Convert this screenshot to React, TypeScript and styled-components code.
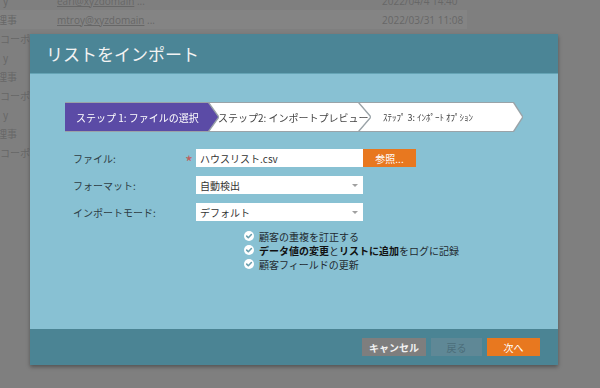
import React from "react";
import styled, { createGlobalStyle } from "styled-components";

const Global = createGlobalStyle`
  html, body { margin: 0; padding: 0; }
  body {
    width: 600px; height: 388px; overflow: hidden;
    background: #7f7f7f;
    font-family: "Noto Sans CJK JP", "Open Sans", sans-serif;
  }
`;

const Page = styled.div`
  position: relative;
  width: 600px;
  height: 388px;
  overflow: hidden;
  background: #7f7f7f;
`;

const List = styled.div`
  display: flex;
  flex-direction: column;
  margin-top: -9px;
`;

const Row = styled.div<{ $hl?: boolean }>`
  display: grid;
  grid-template-columns: 57px 325px 1fr;
  align-items: center;
  width: 467px;
  height: 19px;
  background: ${(p) => (p.$hl ? "#848484" : "transparent")};
  font-family: "Open Sans", "Noto Sans CJK JP", sans-serif;
  font-size: 10px;
  color: #676767;
`;

const LabelCell = styled.div<{ $indent: number }>`
  overflow: hidden;
  white-space: nowrap;
  text-indent: ${(p) => p.$indent}px;
  font-family: "Noto Sans CJK JP", sans-serif;
`;

const EmailCell = styled.div`
  white-space: nowrap;
  & span { text-decoration: underline; }
`;

const DateCell = styled.div`
  white-space: nowrap;
`;

const Dialog = styled.div`
  position: absolute;
  left: 30px;
  top: 34px;
  width: 528px;
  display: flex;
  flex-direction: column;
  box-shadow: 0 2px 4px rgba(0, 0, 0, 0.35);
`;

const Header = styled.div`
  height: 39px;
  background: #4b8596;
  border-bottom: 1px solid #65a4b5;
  display: flex;
  align-items: center;
  padding-left: 16px;
  color: #f3f3f3;
  font-size: 17px;
`;

const Body = styled.div`
  height: 255px;
  box-sizing: border-box;
  background: #88c1d3;
  padding: 29px 35px 0 35px;
  display: flex;
  flex-direction: column;
`;

const StepBar = styled.div`
  display: flex;
  height: 28px;
`;

const StepWrap = styled.div<{ $z: number; $overlap: number; $w: number }>`
  position: relative;
  z-index: ${(p) => p.$z};
  margin-left: ${(p) => -p.$overlap}px;
  width: ${(p) => p.$w}px;
  flex: none;
  filter: drop-shadow(0 1px 0 #9aa3a8) drop-shadow(0 -1px 0 #9aa3a8)
    drop-shadow(1px 0 0 #9aa3a8);
`;

const StepShape = styled.div<{ $active?: boolean; $tip: number; $small?: boolean; $pad: number }>`
  height: 28px;
  box-sizing: border-box;
  display: flex;
  align-items: center;
  padding-left: ${(p) => p.$pad}px;
  white-space: nowrap;
  overflow: hidden;
  background: ${(p) => (p.$active ? "#5b4ba6" : "#ffffff")};
  color: ${(p) => (p.$active ? "#ffffff" : "#444444")};
  font-size: ${(p) => (p.$small ? "9px" : "10px")};
  clip-path: polygon(
    0 0,
    calc(100% - ${(p) => p.$tip}px) 0,
    100% 50%,
    calc(100% - ${(p) => p.$tip}px) 100%,
    0 100%
  );
`;

const Form = styled.div`
  margin-top: 18px;
  margin-left: 8px;
  display: grid;
  grid-template-columns: 112px 11px 167px 53px;
  grid-auto-rows: 18px;
  row-gap: 9px;
  align-items: center;
  font-size: 10px;
  color: #2e3d44;
`;

const Label = styled.div`
  white-space: nowrap;
`;

const Req = styled.div`
  color: #c0615f;
  font-size: 17px;
  line-height: 18px;
  height: 18px;
  padding-top: 4px;
  box-sizing: border-box;
`;

const TextInput = styled.div`
  height: 18px;
  background: #ffffff;
  display: flex;
  align-items: center;
  padding-left: 4px;
  color: #333;
`;

const Select = styled.div`
  height: 18px;
  background: #ffffff;
  display: flex;
  align-items: center;
  justify-content: space-between;
  padding: 0 5px 0 4px;
  color: #333;
`;

const Caret = styled.span`
  width: 0;
  height: 0;
  border-left: 3px solid transparent;
  border-right: 3px solid transparent;
  border-top: 3px solid #a0a0a0;
`;

const OrangeButton = styled.div`
  height: 18px;
  background: #e8781f;
  color: #fff;
  display: flex;
  align-items: center;
  justify-content: center;
  font-size: 10px;
`;

const Spacer = styled.div``;

const CheckList = styled.div`
  margin-top: 8px;
  margin-left: 179px;
  display: flex;
  flex-direction: column;
`;

const CheckRow = styled.div`
  height: 14px;
  display: flex;
  align-items: center;
  gap: 5px;
  font-size: 10px;
  color: #1f2a30;
  white-space: nowrap;
  & b { font-weight: 700; color: #111; }
`;

const Footer = styled.div`
  height: 36px;
  background: #4b8494;
  display: flex;
  align-items: center;
  justify-content: flex-end;
  gap: 5px;
  padding-right: 18px;
`;

const FootButton = styled.div<{ $kind: "cancel" | "back" | "next"; $w: number }>`
  width: ${(p) => p.$w}px;
  height: 18px;
  display: flex;
  align-items: center;
  justify-content: center;
  font-size: 10px;
  font-weight: ${(p) => (p.$kind === "cancel" ? 700 : 400)};
  background: ${(p) =>
    p.$kind === "cancel" ? "#7e7e7e" : p.$kind === "back" ? "#5f8896" : "#e8781f"};
  color: ${(p) =>
    p.$kind === "cancel" ? "#f2f2f2" : p.$kind === "back" ? "#4b6d79" : "#ffffff"};
`;

const CheckIcon = () => (
  <svg width="10" height="10" viewBox="0 0 10 10">
    <circle cx="5" cy="5" r="5" fill="#ffffff" />
    <path d="M2.7 5.1 L4.3 6.7 L7.4 3.5" fill="none" stroke="#6a9fae" strokeWidth="1.6" strokeLinecap="round" strokeLinejoin="round" />
  </svg>
);

type RowData = { label: string; indent: number; email?: string; date?: string; hl?: boolean };

const rows: RowData[] = [
  { label: "y", indent: 3, email: "earl@xyzdomain", date: "2022/04/4 14:40" },
  { label: "理事", indent: -3, email: "mtroy@xyzdomain", date: "2022/03/31 11:08", hl: true },
  { label: "コーポ", indent: 0 },
  { label: "y", indent: 3 },
  { label: "理事", indent: -3 },
  { label: "コーポ", indent: 0 },
  { label: "y", indent: 3 },
  { label: "理事", indent: -3 },
  { label: "コーポ", indent: 0 },
];

export default function App() {
  return (
    <Page>
      <Global />
      <List>
        {rows.map((r, i) => (
          <Row key={i} $hl={r.hl}>
            <LabelCell $indent={r.indent}>{r.label}</LabelCell>
            <EmailCell>
              {r.email && (
                <>
                  <span>{r.email}</span> ...
                </>
              )}
            </EmailCell>
            <DateCell>{r.date}</DateCell>
          </Row>
        ))}
      </List>

      <Dialog>
        <Header>リストをインポート</Header>
        <Body>
          <StepBar>
            <StepWrap $z={3} $overlap={0} $w={153}>
              <StepShape $active $tip={10} $pad={11}>ステップ 1: ファイルの選択</StepShape>
            </StepWrap>
            <StepWrap $z={2} $overlap={10} $w={162}>
              <StepShape $tip={12} $pad={10}>ステップ2: インポートプレビュー</StepShape>
            </StepWrap>
            <StepWrap $z={1} $overlap={12} $w={164}>
              <StepShape $tip={9} $small $pad={25}>ｽﾃｯﾌﾟ 3: ｲﾝﾎﾟｰﾄ ｵﾌﾟｼｮﾝ</StepShape>
            </StepWrap>
          </StepBar>

          <Form>
            <Label>ファイル:</Label>
            <Req>*</Req>
            <TextInput>ハウスリスト.csv</TextInput>
            <OrangeButton>参照...</OrangeButton>

            <Label>フォーマット:</Label>
            <Spacer />
            <Select>
              自動検出
              <Caret />
            </Select>
            <Spacer />

            <Label>インポートモード:</Label>
            <Spacer />
            <Select>
              デフォルト
              <Caret />
            </Select>
            <Spacer />
          </Form>

          <CheckList>
            <CheckRow>
              <CheckIcon />
              顧客の重複を訂正する
            </CheckRow>
            <CheckRow>
              <CheckIcon />
              <span>
                <b>データ値の変更</b>と<b>リストに追加</b>をログに記録
              </span>
            </CheckRow>
            <CheckRow>
              <CheckIcon />
              顧客フィールドの更新
            </CheckRow>
          </CheckList>
        </Body>
        <Footer>
          <FootButton $kind="cancel" $w={64}>キャンセル</FootButton>
          <FootButton $kind="back" $w={51}>戻る</FootButton>
          <FootButton $kind="next" $w={53}>次へ</FootButton>
        </Footer>
      </Dialog>
    </Page>
  );
}
